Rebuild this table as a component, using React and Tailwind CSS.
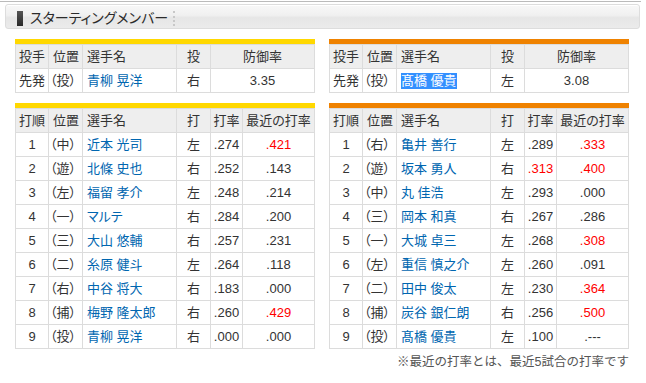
import React from "react";

const BW = ["w-[33px]", "w-[34px]", "w-[94px]", "w-[34px]", "w-[32px]", "w-[72px]"];
const PW = ["w-[33px]", "w-[34px]", "w-[94px]", "w-[34px]", "w-[104px]"];

const leftBat = [
  ["1", "（中）", "近本 光司", "左", ".274", ".421", false, true],
  ["2", "（遊）", "北條 史也", "右", ".252", ".143", false, false],
  ["3", "（左）", "福留 孝介", "左", ".248", ".214", false, false],
  ["4", "（一）", "マルテ", "右", ".284", ".200", false, false],
  ["5", "（三）", "大山 悠輔", "右", ".257", ".231", false, false],
  ["6", "（二）", "糸原 健斗", "左", ".264", ".118", false, false],
  ["7", "（右）", "中谷 将大", "右", ".183", ".000", false, false],
  ["8", "（捕）", "梅野 隆太郎", "右", ".260", ".429", false, true],
  ["9", "（投）", "青柳 晃洋", "右", ".000", ".000", false, false],
];

const rightBat = [
  ["1", "（右）", "亀井 善行", "左", ".289", ".333", false, true],
  ["2", "（遊）", "坂本 勇人", "右", ".313", ".400", true, true],
  ["3", "（中）", "丸 佳浩", "左", ".293", ".000", false, false],
  ["4", "（三）", "岡本 和真", "右", ".267", ".286", false, false],
  ["5", "（一）", "大城 卓三", "左", ".268", ".308", false, true],
  ["6", "（左）", "重信 慎之介", "左", ".260", ".091", false, false],
  ["7", "（二）", "田中 俊太", "左", ".230", ".364", false, true],
  ["8", "（捕）", "炭谷 銀仁朗", "右", ".256", ".500", false, true],
  ["9", "（投）", "髙橋 優貴", "左", ".100", ".---", false, false],
];

const cellBase = "h-[23px] border-r border-[#dcdcdc] flex items-center shrink-0";

function Row({ children, header }) {
  return (
    <div className={`flex border-b border-[#dcdcdc] ${header ? "bg-[#eeeeee]" : "bg-white"}`}>
      {children}
    </div>
  );
}

function PitcherTable({ bar, name, hand, era, highlight }) {
  return (
    <div className="w-[300px]">
      <div className={`h-[5px] ${bar}`} />
      <div className="border-l border-t border-[#dcdcdc]">
        <Row header>
          <div className={`${cellBase} ${PW[0]} justify-center`}>投手</div>
          <div className={`${cellBase} ${PW[1]} pl-[4px]`}>位置</div>
          <div className={`${cellBase} ${PW[2]} pl-[4px]`}>選手名</div>
          <div className={`${cellBase} ${PW[3]} justify-center`}>投</div>
          <div className={`${cellBase} ${PW[4]} justify-center`}>防御率</div>
        </Row>
        <Row>
          <div className={`${cellBase} ${PW[0]} justify-center`}>先発</div>
          <div className={`${cellBase} ${PW[1]} pl-[1px]`}>（投）</div>
          <div className={`${cellBase} ${PW[2]} pl-[4px]`}>
            {highlight ? (
              <span className="bg-[#3390ff] text-white leading-[16px]">{name}</span>
            ) : (
              <span className="text-[#0066b0]">{name}</span>
            )}
          </div>
          <div className={`${cellBase} ${PW[3]} justify-center`}>{hand}</div>
          <div className={`${cellBase} ${PW[4]} justify-center`}>{era}</div>
        </Row>
      </div>
    </div>
  );
}

function BatTable({ bar, rows }) {
  return (
    <div className="w-[300px]">
      <div className={`h-[5px] ${bar}`} />
      <div className="border-l border-t border-[#dcdcdc]">
        <Row header>
          <div className={`${cellBase} ${BW[0]} justify-center`}>打順</div>
          <div className={`${cellBase} ${BW[1]} pl-[4px]`}>位置</div>
          <div className={`${cellBase} ${BW[2]} pl-[4px]`}>選手名</div>
          <div className={`${cellBase} ${BW[3]} justify-center`}>打</div>
          <div className={`${cellBase} ${BW[4]} justify-center`}>打率</div>
          <div className={`${cellBase} ${BW[5]} justify-center`}>最近の打率</div>
        </Row>
        {rows.map((r) => (
          <Row key={r[0]}>
            <div className={`${cellBase} ${BW[0]} justify-center`}>{r[0]}</div>
            <div className={`${cellBase} ${BW[1]} pl-[1px]`}>{r[1]}</div>
            <div className={`${cellBase} ${BW[2]} pl-[4px] text-[#0066b0]`}>{r[2]}</div>
            <div className={`${cellBase} ${BW[3]} justify-center`}>{r[3]}</div>
            <div className={`${cellBase} ${BW[4]} justify-center ${r[6] ? "text-[#ff0000]" : ""}`}>{r[4]}</div>
            <div className={`${cellBase} ${BW[5]} justify-center ${r[7] ? "text-[#ff0000]" : ""}`}>{r[5]}</div>
          </Row>
        ))}
      </div>
    </div>
  );
}

export default function App() {
  return (
    <div className="w-[646px] h-[383px] bg-white text-[#333] text-[13px] font-['Liberation_Sans','Noto_Sans_CJK_JP',sans-serif] [font-feature-settings:'palt'] overflow-hidden">
      <div className="h-[1px]" />
      <div className="h-[1px] w-[641px] bg-[#bbbbbb]" />
      <div className="ml-[5px] mt-[2px] w-[635px] h-[25px] rounded-[3px] border border-[#dddddd] shadow-[inset_0_1px_0_#ffffff] bg-[linear-gradient(#f8f8f8,#f0f0f0_45%,#e6e6e6_55%,#ebebeb)] flex items-center">
        <div className="ml-[11px] w-[6px] h-[15px] mt-[3px] bg-[linear-gradient(#555,#2a2a2a)]" />
        <div className="ml-[7px] mt-[3px] text-[14px] leading-[16px] text-[#2b2b2b]">スターティングメンバー</div>
        <div className="ml-[5px] mt-[3px] h-[15px] border-l-2 border-dotted border-[#c8c8c8]" />
      </div>
      <div className="ml-[5px] w-[634px] px-[10px] mt-[10px]">
        <div className="flex gap-[14px]">
          <div className="flex flex-col gap-[10px]">
            <PitcherTable bar="bg-[#ffd800]" name="青柳 晃洋" hand="右" era="3.35" />
            <BatTable bar="bg-[#ffd800]" rows={leftBat} />
          </div>
          <div className="flex flex-col gap-[10px]">
            <PitcherTable bar="bg-[#ef8200]" name="髙橋 優貴" hand="左" era="3.08" highlight />
            <BatTable bar="bg-[#ef8200]" rows={rightBat} />
          </div>
        </div>
        <div className="flex justify-end mt-[5px] text-[12.5px] leading-[16px] text-[#555] [font-feature-settings:normal]">
          ※最近の打率とは、最近5試合の打率です
        </div>
      </div>
    </div>
  );
}
